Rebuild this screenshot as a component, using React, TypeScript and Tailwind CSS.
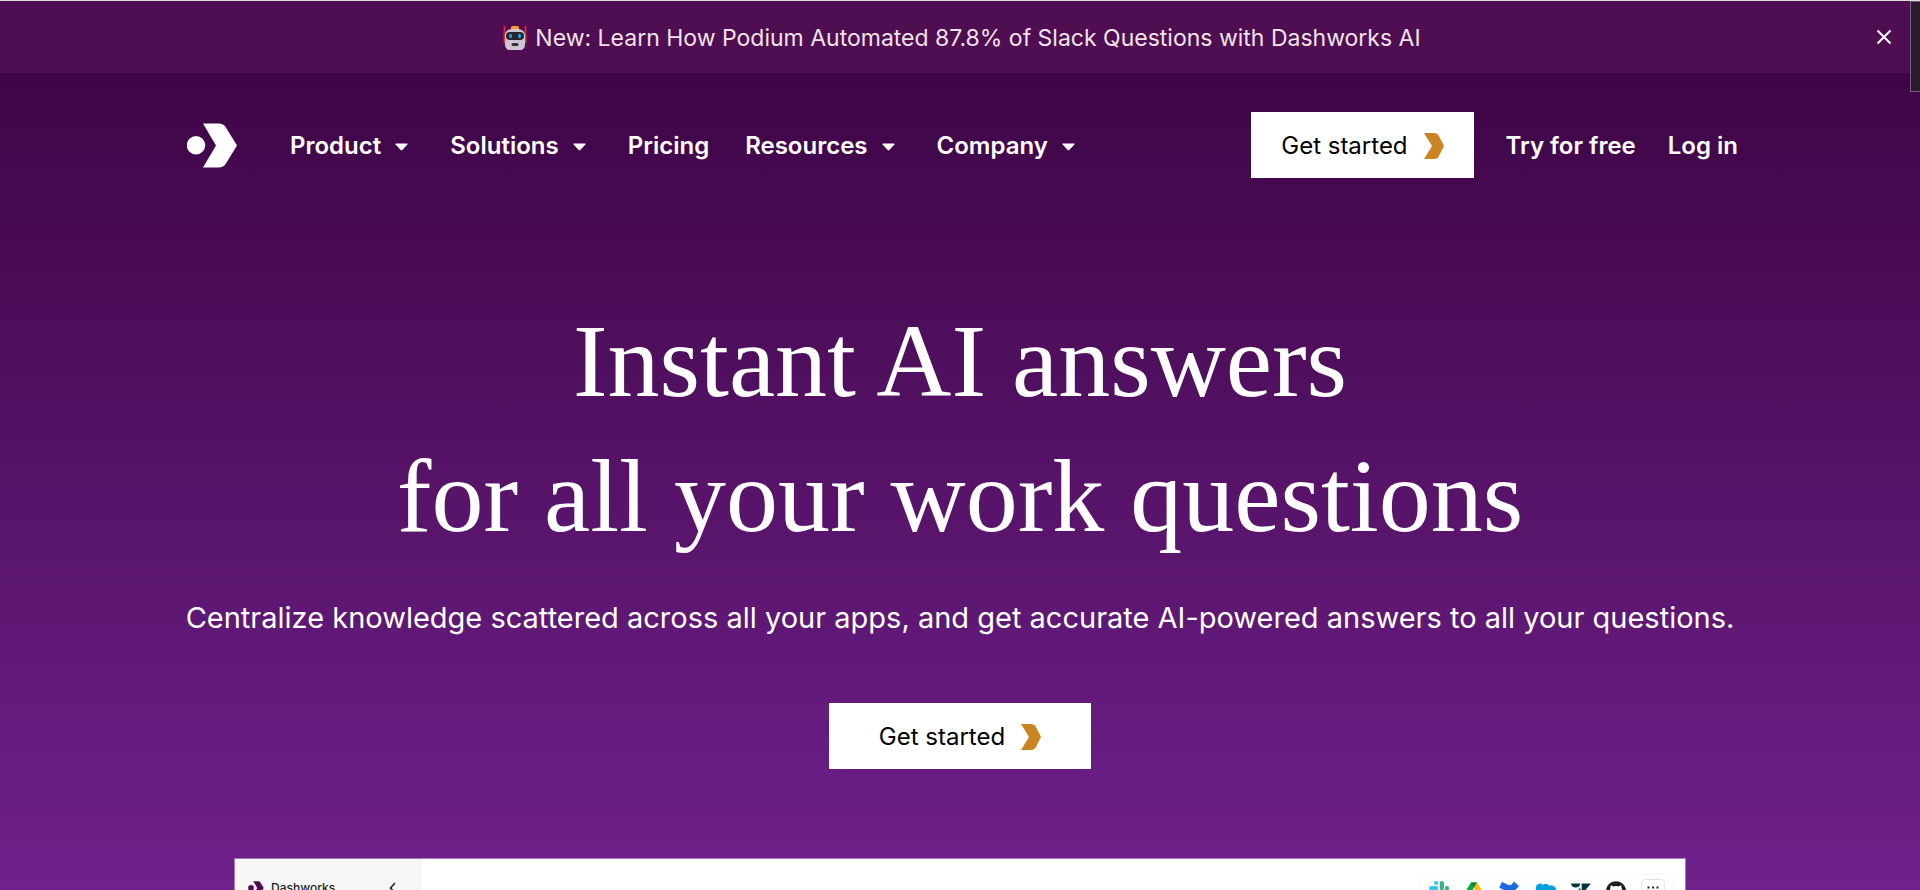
import React from "react";

function Chevron({ className }: { className?: string }) {
  return (
    <svg viewBox="0 0 20 26" className={className} aria-hidden="true">
      <path d="M0 0h10c2.200 0 3.600 1 4.800 2.800L20 13l-5.200 10.200C13.600 25 12.200 26 10 26H0l8-13z" fill="currentColor" />
    </svg>
  );
}

function Logo({ className }: { className?: string }) {
  return (
    <svg viewBox="0 0 50 45" className={className} aria-hidden="true">
      <circle cx="9" cy="22.300" r="9.200" fill="currentColor" />
      <path d="M16 0.500h15.500c3.600 0 5.800 1.200 7.600 4.200L50 22.500 39.100 40.300c-1.800 3-4 4.200-7.600 4.200H16L29 22.500z" fill="currentColor" />
    </svg>
  );
}

function Robot() {
  return (
    <svg viewBox="0 0 24 24" className="size-6" aria-hidden="true">
      <path d="M1.500 0v17M22.500 0v17" stroke="#d92b3a" strokeWidth="1.800" />
      <path d="M0.800 10v6c0 1 1 1.500 2 1.500v-9c-1 0-2 .5-2 1.500zM23.200 10v6c0 1-1 1.500-2 1.500v-9c1 0 2 .5 2 1.500z" fill="#ef2f3c" />
      <rect x="8" y="0" width="8" height="5" rx="1.500" fill="#f9a02b" />
      <path d="M2 10c0-5 3.500-7 7-7h6c3.500 0 7 2 7 7v8c0 4-2 6-5 6H7c-3 0-5-2-5-6z" fill="#cdc4d6" />
      <rect x="3" y="6" width="18" height="8" rx="4" fill="#26262b" />
      <ellipse cx="7.500" cy="10" rx="1.500" ry="2.300" fill="#16a5e8" />
      <ellipse cx="16.500" cy="10" rx="1.500" ry="2.300" fill="#16a5e8" />
      <rect x="8.500" y="17" width="7" height="3" rx="1.500" fill="#333039" />
    </svg>
  );
}

function Caret() {
  return (
    <svg viewBox="0 0 13 8" className="mt-0.5 h-2 w-[13px]" aria-hidden="true">
      <path d="M1 0.500h11q1 0 .4.900L7.300 7q-.8.800-1.600 0L.6 1.400Q0 .5 1 .5z" fill="currentColor" />
    </svg>
  );
}

const menu = [
  { label: "Product", drop: true },
  { label: "Solutions", drop: true },
  { label: "Pricing", drop: false },
  { label: "Resources", drop: true },
  { label: "Company", drop: true },
];

function Banner() {
  return (
    <div className="flex h-[73px] items-center border-t border-[#ddd] bg-[#4f0d52] pr-7 pl-12">
      <a href="#" className="mx-auto flex items-center gap-2 pt-0.5 text-[23px] leading-8 text-[#eee3e8]">
        <Robot />
        New: Learn How Podium Automated 87.8% of Slack Questions with Dashworks AI
      </a>
      <button aria-label="Close announcement">
        <svg viewBox="0 0 16 16" className="size-4" aria-hidden="true">
          <path d="M1.500 1.500l13 13M14.500 1.500l-13 13" stroke="white" strokeWidth="2" />
        </svg>
      </button>
    </div>
  );
}

function Header() {
  return (
    <header className="mx-auto flex w-full max-w-[1556px] items-center justify-between pt-[39px] text-2xl leading-8 font-semibold">
      <div className="flex items-center">
        <a href="#" aria-label="Dashworks home" className="mr-[53px] ml-[5px]">
          <Logo className="h-[45px] w-[50px]" />
        </a>
        <nav className="flex items-center gap-9 pt-0.5">
          {menu.map((m) =>
            m.drop ? (
              <button key={m.label} className="flex items-center gap-[14px] pr-[6px]">
                {m.label}
                <Caret />
              </button>
            ) : (
              <a key={m.label} href="#">
                {m.label}
              </a>
            ),
          )}
        </nav>
      </div>
      <div className="flex items-center">
        <button className="mr-8 flex h-[66px] items-center gap-4 bg-white px-[30px] pt-0.5 font-normal text-black">
          Get started
          <Chevron className="h-[26px] w-5 text-[#cc8422]" />
        </button>
        <div className="flex gap-8 pt-0.5">
          <a href="#">Try for free</a>
          <a href="#">Log in</a>
        </div>
      </div>
    </header>
  );
}

function AppIcons() {
  return (
    <div className="mt-[15px] mr-[11px] flex h-10 items-start gap-[15px] rounded-lg border border-[#f6f6f6] pt-[6px] pr-2 pl-[10px]">
      <svg viewBox="0 0 20 20" className="size-5" role="img" aria-label="Slack">
        <rect x="5" y="0" width="4.200" height="4" rx="2" fill="#36c5f0" />
        <rect x="0" y="5" width="9.200" height="4.200" rx="2.100" fill="#36c5f0" />
        <rect x="10.800" y="0" width="4.200" height="9.200" rx="2.100" fill="#2eb67d" />
        <rect x="16" y="5" width="4" height="4.200" rx="2" fill="#2eb67d" />
        <rect x="0" y="10.800" width="4" height="4.200" rx="2" fill="#e01e5a" />
        <rect x="5" y="10.800" width="4.200" height="9.200" rx="2.100" fill="#e01e5a" />
        <rect x="10.800" y="10.800" width="9.200" height="4.200" rx="2.100" fill="#ecb22e" />
        <rect x="10.800" y="16" width="4.200" height="4" rx="2" fill="#ecb22e" />
      </svg>
      <svg viewBox="0 0 20 20" className="size-5" role="img" aria-label="Google Drive">
        <path d="M7 1.500h6L6.500 12.500 3.300 18 0 12.700z" fill="#00ac47" />
        <path d="M7 1.500h6L10 6.800z" fill="#00832d" />
        <path d="M13 1.500l7 11.200h-6.500L10 6.800z" fill="#ffba00" />
        <path d="M6.500 12.700H20L16.700 18H3.300z" fill="#2684fc" />
      </svg>
      <svg viewBox="0 0 20 20" className="size-5" role="img" aria-label="Confluence">
        <path d="M19.500 4.500L15.500 1c-.4-.3-.8-.2-1.100.2-2 3.200-3.300 3.500-6 2.300L3.700 1.200c-.4-.2-.8 0-1 .3L.5 6c-.2.500 0 .8.400 1l4.500 2.200c6 2.800 10.400 1.500 14.200-3.700.3-.4.200-.7-.1-1z" fill="#1f68e5" />
        <path d="M.5 15.500L4.500 19c.4.300.8.200 1.100-.2 2-3.200 3.300-3.500 6-2.300l4.700 2.300c.4.200.8 0 1-.3l2.200-4.500c.2-.5 0-.8-.4-1l-4.500-2.200C8.600 8 4.200 9.300.4 14.500c-.3.400-.2.700.1 1z" fill="#2684ff" />
      </svg>
      <svg viewBox="0 0 22 18" className="mt-[2px] h-[18px] w-[22px]" role="img" aria-label="Salesforce">
        <path d="M9.200 2a4 4 0 016.200.8A4.600 4.600 0 1118 11.500a3.700 3.700 0 01-4.800 1.600 4 4 0 01-7.300-.3A4 4 0 012 6.200 4.300 4.300 0 019.200 2z" fill="#00a1e0" />
      </svg>
      <svg viewBox="0 0 20 20" className="size-5" role="img" aria-label="Zendesk">
        <path d="M0 2.500h9.300a4.700 4.700 0 01-9.300 0zM9.300 6.500v11H0zM10.700 13.500V2.500H20zM10.700 17.500a4.700 4.700 0 019.300 0z" fill="#03363d" />
      </svg>
      <svg viewBox="0 0 24 24" className="size-5" role="img" aria-label="GitHub">
        <path
          d="M12 .3a12 12 0 00-3.800 23.400c.6.100.8-.3.800-.6v-2.200c-3.300.7-4-1.400-4-1.400-.6-1.400-1.400-1.800-1.400-1.800-1-.7.100-.7.100-.7 1.200.1 1.800 1.200 1.800 1.200 1.100 1.900 2.900 1.300 3.500 1 .1-.8.400-1.300.8-1.600-2.700-.3-5.500-1.300-5.500-6 0-1.200.5-2.300 1.300-3.100-.2-.4-.6-1.600.1-3.200 0 0 1-.3 3.300 1.200a11.500 11.500 0 016 0C17.300 5 18.300 5.300 18.300 5.300c.7 1.600.2 2.800.1 3.200.8.800 1.300 1.900 1.300 3.200 0 4.600-2.800 5.600-5.500 5.900.5.400.9 1 .9 2.200v3.300c0 .3.100.7.800.6A12 12 0 0012 .3"
          fill="#1b1f23"
        />
      </svg>
      <button aria-label="More apps" className="-mt-0.5 flex size-6 justify-center rounded border border-[#e4e4e4] pt-[6px]">
        <svg viewBox="0 0 12 3" className="h-[3px] w-3" aria-hidden="true">
          <path d="M.5.500h2v2h-2zM5 .5h2v2H5zM9.500.500h2v2h-2z" fill="#222" />
        </svg>
      </button>
    </div>
  );
}

function Preview() {
  return (
    <section className="mx-auto mt-[89px] flex h-96 w-full max-w-[1452px] items-stretch justify-between border border-[#a67bb5] bg-white text-[#222]">
      <div className="flex w-[186px] items-start justify-between border-r border-[#eee] bg-[#f7f7f7] pt-[21px] pr-6 pl-[13px]">
        <div className="flex items-center gap-[7px] text-xs leading-4 font-medium">
          <Logo className="h-[14px] w-4 text-[#4f0d52]" />
          Dashworks
        </div>
        <button aria-label="Collapse sidebar" className="mt-0.5">
          <svg viewBox="0 0 7 12" className="h-3 w-[7px]" aria-hidden="true">
            <path d="M6 1L1.500 6 6 11" fill="none" stroke="#222" strokeWidth="1.600" />
          </svg>
        </button>
      </div>
      <AppIcons />
    </section>
  );
}

export default function App() {
  return (
    <div className="relative h-screen overflow-hidden bg-linear-to-b from-[#3a0440] to-[#6f218c] font-['Inter',sans-serif] text-white">
      <Banner />
      <div className="absolute top-px right-0 h-[91px] w-[10px] border border-r-0 border-[#7b5a80] bg-[#2c1a2f]" />
      <Header />
      <main className="flex flex-col items-center text-center">
        <h1 className="mt-[115px] font-['Liberation_Serif',serif] text-[104px] leading-[135px]">
          Instant AI answers
          <br />
          for all your work questions
        </h1>
        <p className="mt-8 text-[29px] leading-[45px]">
          Centralize knowledge scattered across all your apps, and get accurate AI-powered answers to all your questions.
        </p>
        <button className="mt-[63px] flex h-[66px] w-[262px] items-center justify-center gap-4 bg-white pt-0.5 text-2xl text-black">
          Get started
          <Chevron className="h-[26px] w-5 text-[#cc8422]" />
        </button>
      </main>
      <Preview />
    </div>
  );
}
